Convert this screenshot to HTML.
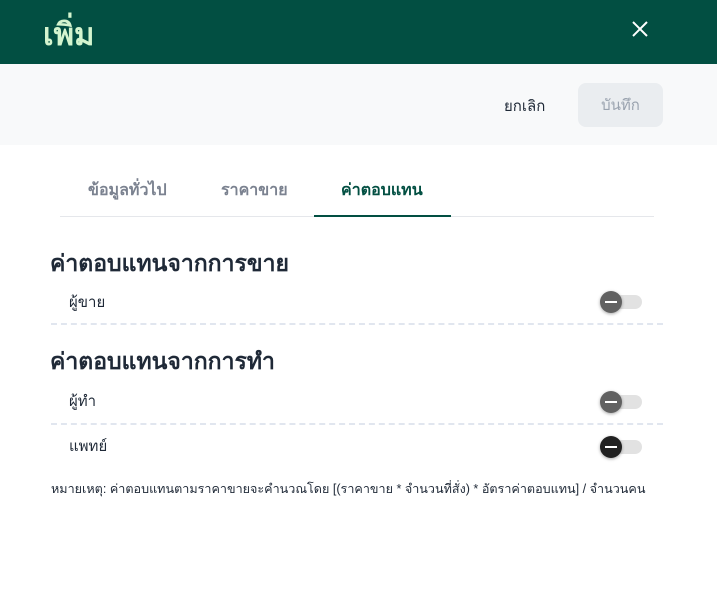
<!DOCTYPE html>
<html><head><meta charset="utf-8"><style>
*{margin:0;padding:0;box-sizing:border-box}
body{width:717px;height:609px;background:#fff;font-family:"Liberation Sans","Noto Sans CJK SC",sans-serif;position:relative;overflow:hidden;color:#1f2937}
.abs{position:absolute}
.hdr{left:0;top:0;width:717px;height:64px;background:#024f42}
.bar{left:0;top:64px;width:717px;height:81px;background:#f8f9fa}
.tog{position:absolute;width:40px;height:14px;border-radius:7px;background:#e2e2e2}
.tog .k{position:absolute;left:-2px;top:-4px;width:22px;height:22px;border-radius:50%;background:#616161;box-shadow:0 1px 3px rgba(0,0,0,.35)}
.tog .k:after{content:"";position:absolute;left:5px;top:10px;width:12px;height:2px;background:#fff}
.dash{position:absolute;left:51px;width:612px;border-top:2px dashed #e1e6ef}
</style></head><body>
<div class="abs hdr"></div>
<div class="abs" style="left:43px;top:9px;font-size:31px;font-weight:bold;color:#d4f5cf">เพิ่ม</div>
<svg class="abs" style="left:631px;top:20px" width="18" height="18" viewBox="0 0 18 18"><path d="M2 2L16 16M16 2L2 16" stroke="#fff" stroke-width="2"/></svg>
<div class="abs bar"></div>
<div class="abs" style="left:504px;top:94px;font-size:15px;color:#1f2937">ยกเลิก</div>
<div class="abs" style="left:578px;top:83px;width:85px;height:44px;border-radius:8px;background:#eaedf0;color:#9aa3af;font-size:15px;text-align:center;line-height:46px">บันทึก</div>
<div class="abs" style="left:88px;top:178px;font-size:16px;color:#7b8290;font-weight:bold">ข้อมูลทั่วไป</div>
<div class="abs" style="left:221px;top:178px;font-size:16px;color:#7b8290;font-weight:bold">ราคาขาย</div>
<div class="abs" style="left:341px;top:178px;font-size:16px;color:#024f42;font-weight:bold">ค่าตอบแทน</div>
<div class="abs" style="left:60px;top:216px;width:594px;height:1px;background:#e5e7eb"></div>
<div class="abs" style="left:314px;top:215px;width:137px;height:2px;background:#024f42"></div>
<div class="abs" style="left:50px;top:246px;font-size:23px;font-weight:bold;color:#1f2937">ค่าตอบแทนจากการขาย</div>
<div class="abs" style="left:69px;top:290px;font-size:15px">ผู้ขาย</div>
<div class="tog" style="left:602px;top:295px"><div class="k"></div></div>
<div class="dash" style="top:323px"></div>
<div class="abs" style="left:50px;top:344px;font-size:23px;font-weight:bold;color:#1f2937">ค่าตอบแทนจากการทำ</div>
<div class="abs" style="left:69px;top:389px;font-size:15px">ผู้ทำ</div>
<div class="tog" style="left:602px;top:395px"><div class="k"></div></div>
<div class="dash" style="top:423px"></div>
<div class="abs" style="left:69px;top:434px;font-size:15px">แพทย์</div>
<div class="tog" style="left:602px;top:440px"><div class="k" style="background:#212121"></div></div>
<div class="abs" style="left:51px;top:479px;font-size:12.6px;color:#1f2937;white-space:nowrap">หมายเหตุ: ค่าตอบแทนตามราคาขายจะคำนวณโดย [(ราคาขาย * จำนวนที่สั่ง) * อัตราค่าตอบแทน] / จำนวนคน</div>
</body></html>
